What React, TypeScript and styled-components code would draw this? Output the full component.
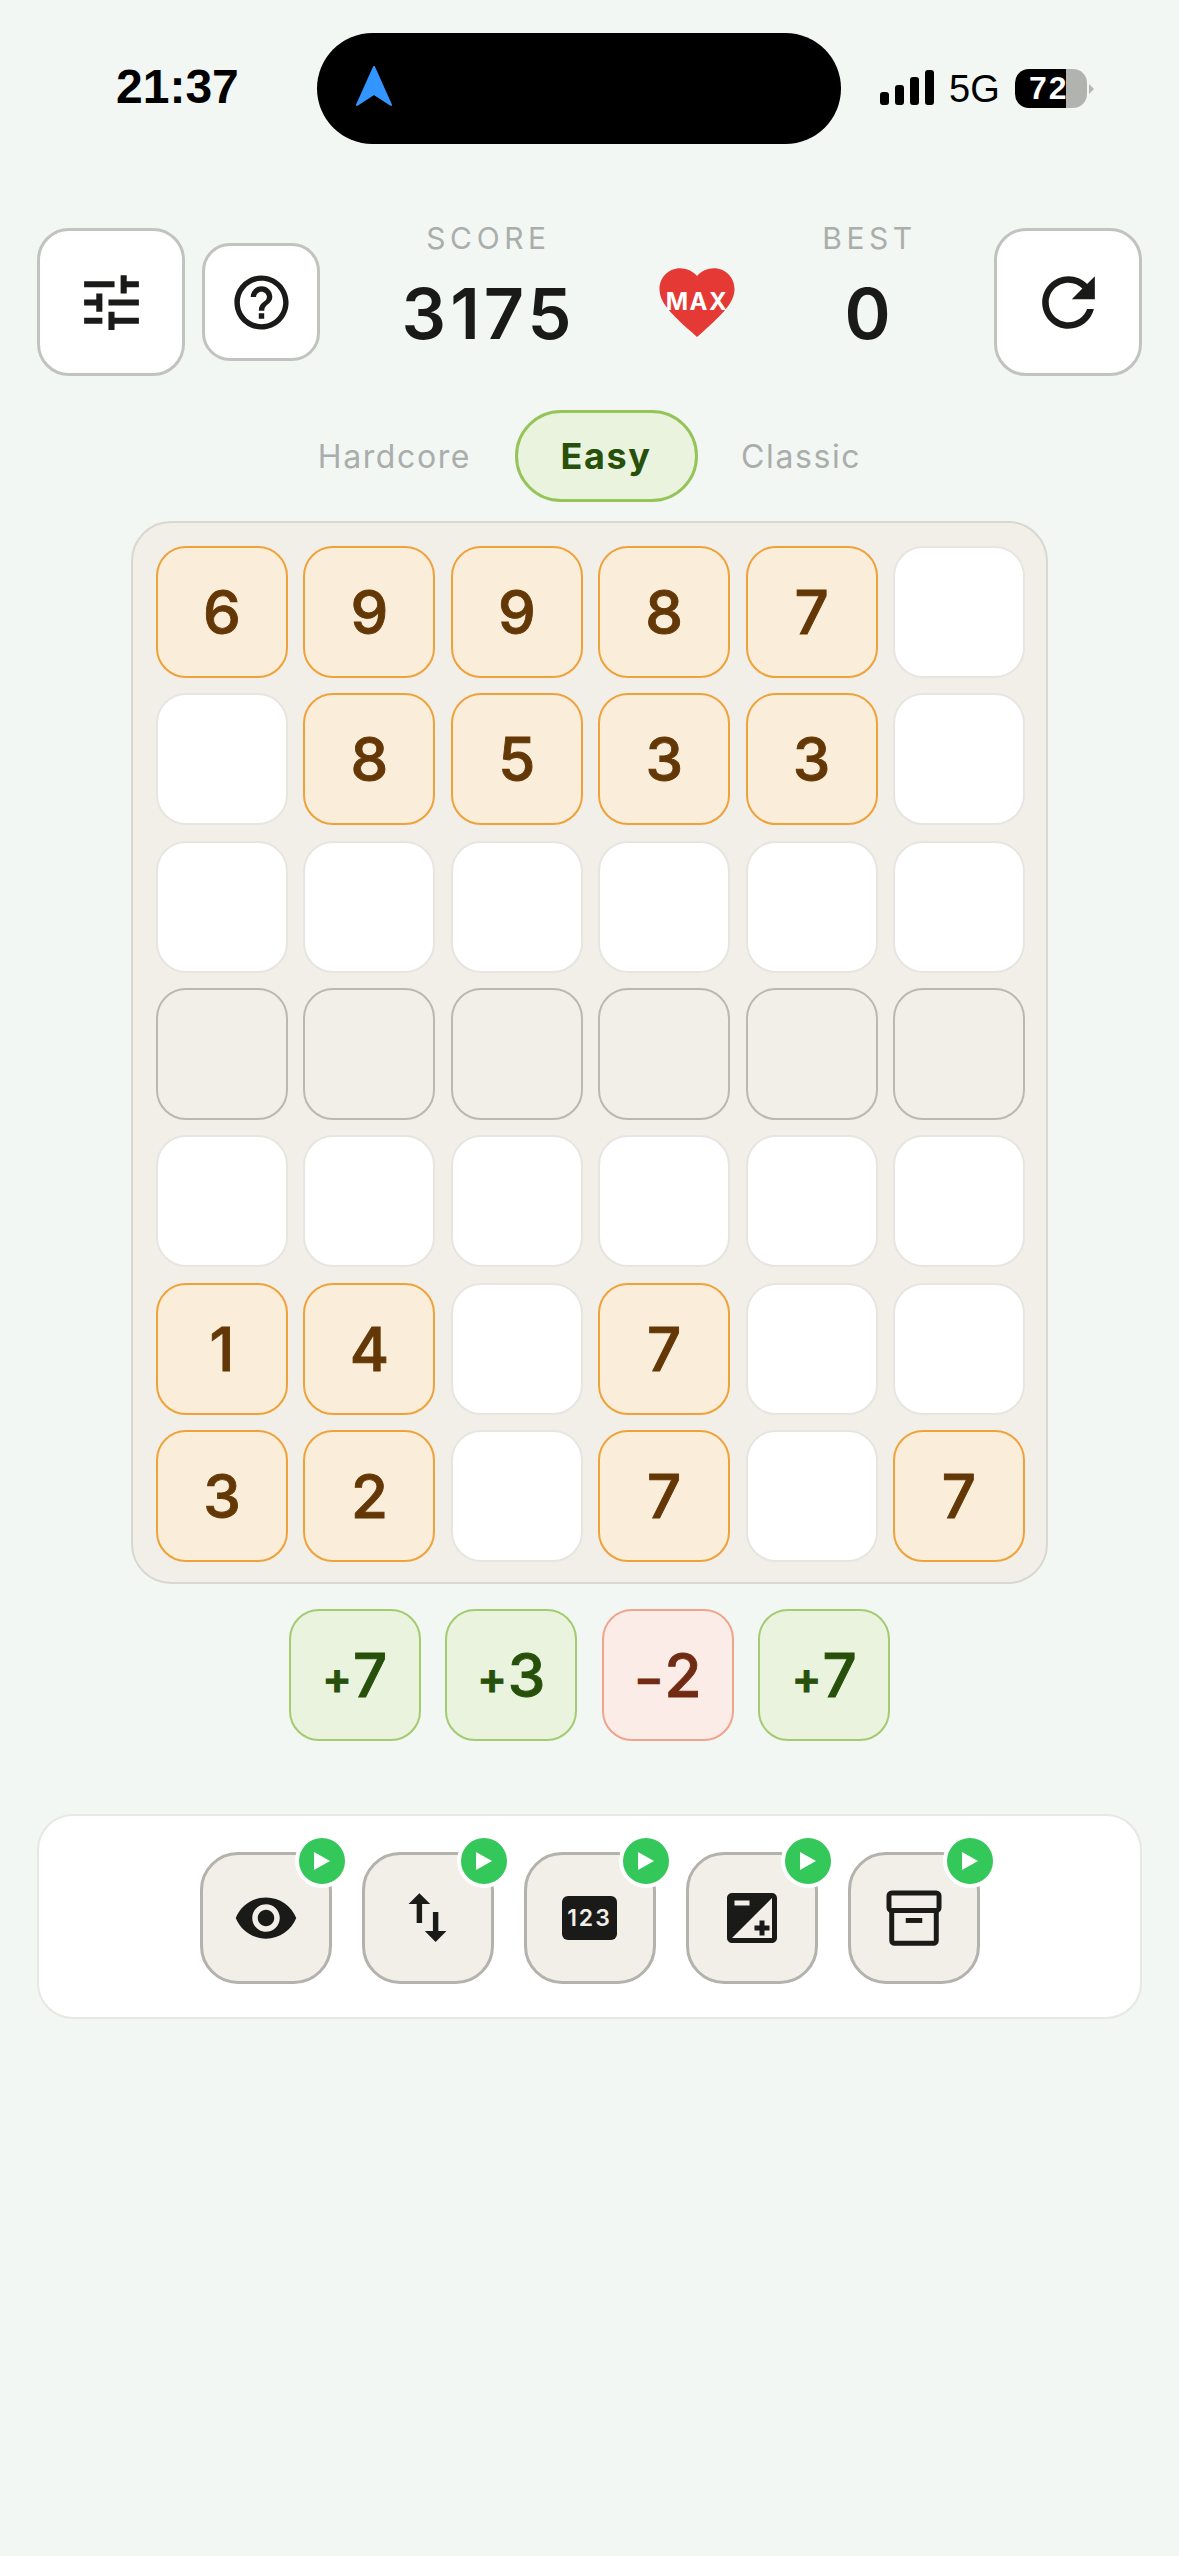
import React from "react";
import styled, { createGlobalStyle } from "styled-components";

const Global = createGlobalStyle`
  html, body { margin: 0; padding: 0; background: #f2f7f4; }
  * { box-sizing: border-box; }
`;

const Page = styled.div`
  width: 1179px;
  min-height: 2556px;
  background: #f2f7f4;
  font-family: Inter, "Liberation Sans", sans-serif;
  display: flex;
  flex-direction: column;
  align-items: center;
  overflow: hidden;
`;

/* status bar */
const StatusBar = styled.div`
  width: 100%;
  height: 111px;
  margin-top: 33px;
  padding-left: 116px;
  display: flex;
  align-items: center;
  font-family: "Liberation Sans", Arial, sans-serif;
  color: #000;
`;
const Clock = styled.div`
  width: 201px;
  font-size: 48px;
  font-weight: 700;
  line-height: 1;
  margin-top: -3px;
`;
const Island = styled.div`
  width: 524px;
  height: 111px;
  border-radius: 56px;
  background: #000;
  padding-left: 38px;
  display: flex;
  align-items: center;
`;
const Signal = styled.div`
  margin-left: 39px;
  width: 54px;
  height: 35px;
  display: flex;
  align-items: flex-end;
  justify-content: space-between;
  transform: translateY(-1px);
`;
const SignalBar = styled.i<{ $h: number }>`
  display: block;
  width: 9px;
  height: ${(p) => p.$h}px;
  border-radius: 3px;
  background: #000;
`;
const Network = styled.div`
  margin-left: 15px;
  width: 52px;
  font-size: 38px;
  line-height: 1;
  margin-top: 1px;
`;
const Battery = styled.div`
  margin-left: 14px;
  width: 72px;
  height: 39px;
  border-radius: 14px;
  background: linear-gradient(to right, #000 0, #000 51px, #b1b3af 51px);
  color: #fff;
  font-size: 32px;
  font-weight: 700;
  letter-spacing: 2px;
  line-height: 39px;
  padding-left: 14px;
  margin-top: -1px;
`;
const BatteryNub = styled.i`
  display: block;
  margin-left: 2px;
  width: 0;
  height: 0;
  border-top: 5px solid transparent;
  border-bottom: 5px solid transparent;
  border-left: 5px solid #b5b6b3;
`;

/* header */
const Header = styled.div`
  width: 1105px;
  margin-top: 76px;
  display: grid;
  grid-template-columns: 148px 135px 332px 90px 250px 150px;
  align-items: start;
`;
const IconButton = styled.button<{ $small?: boolean }>`
  justify-self: end;
  width: ${(p) => (p.$small ? 118 : 148)}px;
  height: ${(p) => (p.$small ? 118 : 148)}px;
  margin-top: ${(p) => (p.$small ? 23 : 8)}px;
  border-radius: ${(p) => (p.$small ? 28 : 32)}px;
  border: 3px solid #c1c3bf;
  background: #fff;
  padding: 0;
  display: flex;
  align-items: center;
  justify-content: center;
  color: #1a1a18;
`;
const Stat = styled.div`
  padding-left: 5px;
  display: flex;
  flex-direction: column;
  align-items: center;
`;
const StatLabel = styled.div`
  font-size: 30px;
  line-height: 36px;
  letter-spacing: 4.6px;
  color: #abadab;
`;
const StatValue = styled.div`
  margin-top: 18px;
  font-size: 70px;
  line-height: 80px;
  font-weight: 600;
  letter-spacing: 4px;
  color: #1a1a18;
`;
const HeartBox = styled.div`
  position: relative;
  width: 90px;
  height: 90px;
  margin-top: 37px;
  color: #e53935;
`;
const HeartText = styled.span`
  position: absolute;
  left: -5px;
  right: -5px;
  top: 31px;
  text-align: center;
  color: #fff;
  font-size: 24px;
  line-height: 28px;
  font-weight: 700;
  letter-spacing: 1.5px;
`;

/* tabs */
const Tabs = styled.div`
  margin-top: 34px;
  height: 92px;
  display: flex;
  align-items: center;
  justify-content: center;
  gap: 43.5px;
`;
const Tab = styled.div<{ $active?: boolean }>`
  font-size: ${(p) => (p.$active ? 36 : 32)}px;
  font-weight: ${(p) => (p.$active ? 700 : 400)};
  letter-spacing: 1.6px;
  color: ${(p) => (p.$active ? "#27500a" : "#abadab")};
  ${(p) =>
    p.$active
      ? `
    height: 92px;
    line-height: 86px;
    padding: 0 43px;
    border-radius: 46px;
    border: 3px solid #97c459;
    background: #eaf3de;
  `
      : ""}
`;

/* board */
const Board = styled.div`
  margin-top: 19px;
  padding: 23px 21px 20px 23px;
  border: 2px solid #d8d7d0;
  border-radius: 40px;
  background: #f1efe8;
  display: grid;
  grid-template-columns: repeat(6, 132px);
  grid-auto-rows: 132px;
  column-gap: 15.4px;
  row-gap: 15.33px;
`;
type Kind = "value" | "empty" | "blocked";
const cellStyles: Record<Kind, string> = {
  value: "background:#faeeda;border:2px solid #efa23a;",
  empty: "background:#fff;border:2px solid #e6e5e0;",
  blocked: "background:#f1efe8;border:2px solid #bab8b0;",
};
const Cell = styled.div<{ $kind: Kind }>`
  ${(p) => cellStyles[p.$kind]}
  border-radius: 30px;
  display: flex;
  align-items: center;
  justify-content: center;
  font-size: 60px;
  font-weight: 500;
  -webkit-text-stroke: 0.9px currentColor;
  color: #633806;
`;

/* bonus tiles */
const BonusRow = styled.div`
  margin-top: 25px;
  display: flex;
  gap: 24.5px;
`;
const Bonus = styled.div<{ $bad?: boolean }>`
  width: 132px;
  height: 132px;
  border-radius: 30px;
  border: 2px solid ${(p) => (p.$bad ? "#f0a48c" : "#a3cb70")};
  background: ${(p) => (p.$bad ? "#fbece8" : "#e9f3dd")};
  color: ${(p) => (p.$bad ? "#712b13" : "#27500a")};
  display: flex;
  align-items: center;
  justify-content: center;
`;
const BonusText = styled.span`
  font-size: 60px;
  font-weight: 500;
  -webkit-text-stroke: 0.9px currentColor;
`;
const BonusSign = styled.span`
  font-size: 44px;
  font-weight: 600;
  position: relative;
  top: -3px;
  margin-right: 1px;
`;

/* power-ups */
const Tray = styled.div`
  margin-top: 73px;
  width: 1105px;
  height: 205px;
  padding-top: 36px;
  border: 2px solid #e7e7e3;
  border-radius: 36px;
  background: #fff;
  display: flex;
  justify-content: center;
  gap: 30px;
`;
const Power = styled.button`
  position: relative;
  width: 132px;
  height: 132px;
  padding: 0;
  border: 3px solid #b4b2ad;
  border-radius: 38px;
  background: #f1efe8;
  display: flex;
  align-items: center;
  justify-content: center;
  color: #1a1a18;
`;
const PlayBadge = styled.span`
  position: absolute;
  top: -21px;
  right: -20px;
  width: 54px;
  height: 54px;
  border-radius: 50%;
  border: 4px solid #fff;
  background: #34c759;
  display: flex;
  align-items: center;
  justify-content: center;
`;
const NumberPad = styled.span`
  width: 55px;
  height: 44px;
  border-radius: 6px;
  background: #1a1a18;
  color: #f1efe8;
  font-family: Inter, sans-serif;
  font-size: 23px;
  font-weight: 600;
  letter-spacing: 2px;
  line-height: 44px;
  text-align: center;
`;

const Icon = ({ size, d }: { size: number; d: string }) => (
  <svg width={size} height={size} viewBox="0 0 24 24" fill="currentColor">
    <path d={d} />
  </svg>
);

const paths = {
  tune: "M3 17v2h6v-2H3zM3 5v2h10V5H3zm10 16v-2h8v-2h-8v-2h-2v6h2zM7 9v2H3v2h4v2h2V9H7zm14 4v-2H11v2h10zm-6-4h2V7h4V5h-4V3h-2v6z",
  help: "M11 18h2v-2h-2v2zm1-16C6.48 2 2 6.48 2 12s4.48 10 10 10 10-4.48 10-10S17.52 2 12 2zm0 18c-4.41 0-8-3.59-8-8s3.59-8 8-8 8 3.59 8 8-3.59 8-8 8zm0-14c-2.21 0-4 1.79-4 4h2c0-1.1.9-2 2-2s2 .9 2 2c0 2-3 1.75-3 5h2c0-2.25 3-2.5 3-5 0-2.21-1.79-4-4-4z",
  refresh: "M17.65 6.35C16.2 4.9 14.21 4 12 4c-4.42 0-7.99 3.58-7.99 8s3.57 8 7.99 8c3.73 0 6.84-2.55 7.73-6h-2.08c-.82 2.33-3.04 4-5.65 4-3.31 0-6-2.69-6-6s2.69-6 6-6c1.66 0 3.14.69 4.22 1.78L13 11h7V4l-2.35 2.35z",
  heart: "M12 21.35l-1.45-1.32C5.4 15.36 2 12.28 2 8.5 2 5.42 4.42 3 7.5 3c1.74 0 3.41.81 4.5 2.09C13.09 3.81 14.76 3 16.5 3 19.58 3 22 5.42 22 8.5c0 3.78-3.4 6.86-8.55 11.54L12 21.35z",
  eye: "M12 4.5C7 4.5 2.73 7.61 1 12c1.73 4.39 6 7.5 11 7.5s9.27-3.11 11-7.5c-1.73-4.39-6-7.5-11-7.5zM12 17c-2.76 0-5-2.24-5-5s2.24-5 5-5 5 2.24 5 5-2.24 5-5 5zm0-8c-1.66 0-3 1.34-3 3s1.34 3 3 3 3-1.34 3-3-1.34-3-3-3z",
  swap: "M16 17.01V10h-2v7.01h-3L15 21l4-3.99h-3zM9 3L5 6.99h3V14h2V6.99h3L9 3z",
  exposure: "M15 17v2h2v-2h2v-2h-2v-2h-2v2h-2v2h2zm5-15H4c-1.1 0-2 .9-2 2v16c0 1.1.9 2 2 2h16c1.1 0 2-.9 2-2V4c0-1.1-.9-2-2-2zM5 5h6v2H5V5zm15 15H4L20 4v16z",
};

const ArchiveIcon = () => (
  <svg width={66} height={66} viewBox="0 0 24 24" fill="none" stroke="currentColor" strokeWidth={1.8}>
    <rect x="2.9" y="2.9" width="18.2" height="6.4" rx="1" />
    <path d="M3.9 9.2v11a1 1 0 0 0 1 1h14.2a1 1 0 0 0 1-1v-11" />
    <path d="M9 12.9h6" />
  </svg>
);

const rows: string[] = ["69987_", "_8533_", "______", "######", "______", "14_7__", "32_7_7"];
const bonuses = [
  { sign: "+", value: "7" },
  { sign: "+", value: "3" },
  { sign: "−", value: "2", bad: true },
  { sign: "+", value: "7" },
];

const kindOf = (c: string): Kind => (c === "_" ? "empty" : c === "#" ? "blocked" : "value");

const powers: React.ReactNode[] = [
  <Icon size={66} d={paths.eye} />,
  <Icon size={65} d={paths.swap} />,
  <NumberPad>123</NumberPad>,
  <Icon size={60} d={paths.exposure} />,
  <ArchiveIcon />,
];

export default function App() {
  return (
    <Page>
      <Global />
      <StatusBar>
        <Clock>21:37</Clock>
        <Island>
          <svg width="38" height="42" viewBox="0 0 38 42" style={{ marginTop: -5 }}>
            <path d="M19 2 L36 40 L19 29 L2 40 Z" fill="#3395ff" stroke="#3395ff" strokeWidth="2" strokeLinejoin="round" />
          </svg>
        </Island>
        <Signal>
          {[13, 20, 28, 35].map((h) => (
            <SignalBar key={h} $h={h} />
          ))}
        </Signal>
        <Network>5G</Network>
        <Battery>72</Battery>
        <BatteryNub />
      </StatusBar>

      <Header>
        <IconButton>
          <Icon size={73} d={paths.tune} />
        </IconButton>
        <IconButton $small>
          <Icon size={65} d={paths.help} />
        </IconButton>
        <Stat>
          <StatLabel>SCORE</StatLabel>
          <StatValue>3175</StatValue>
        </Stat>
        <HeartBox>
          <Icon size={90} d={paths.heart} />
          <HeartText>MAX</HeartText>
        </HeartBox>
        <Stat>
          <StatLabel>BEST</StatLabel>
          <StatValue>0</StatValue>
        </Stat>
        <IconButton>
          <Icon size={79} d={paths.refresh} />
        </IconButton>
      </Header>

      <Tabs>
        <Tab>Hardcore</Tab>
        <Tab $active>Easy</Tab>
        <Tab>Classic</Tab>
      </Tabs>

      <Board>
        {rows.flatMap((row, r) =>
          row.split("").map((c, i) => (
            <Cell key={`${r}-${i}`} $kind={kindOf(c)}>
              {kindOf(c) === "value" ? c : null}
            </Cell>
          ))
        )}
      </Board>

      <BonusRow>
        {bonuses.map((b, i) => (
          <Bonus key={i} $bad={b.bad}>
            <BonusText>
              <BonusSign>{b.sign}</BonusSign>
              {b.value}
            </BonusText>
          </Bonus>
        ))}
      </BonusRow>

      <Tray>
        {powers.map((p, i) => (
          <Power key={i}>
            {p}
            <PlayBadge>
              <svg width="17" height="18" viewBox="0 0 17 18">
                <path d="M1 0 L17 9 L1 18 Z" fill="#fff" />
              </svg>
            </PlayBadge>
          </Power>
        ))}
      </Tray>
    </Page>
  );
}
